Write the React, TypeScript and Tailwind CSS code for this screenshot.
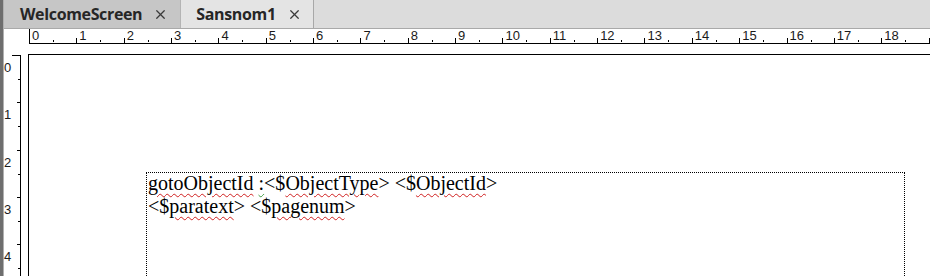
import { X } from "lucide-react";

const hUnits = Array.from({ length: 19 }, (_, i) => i);
const vUnits = Array.from({ length: 5 }, (_, i) => i);

function Tab({ title, active }: { title: string; active?: boolean }) {
  return (
    <div
      className={
        active
          ? "flex items-center h-full pl-[16px] pr-[12px] gap-[11px] bg-[#c6c6c6] border-r border-[#b4b4b4]"
          : "flex items-center h-full pl-[15px] pr-[11px] gap-[11px] bg-[#e4e4e4] border-r border-[#a8a8a8]"
      }
    >
      <span className="text-[16px] font-bold text-[#262626] leading-none tracking-[-0.35px]">{title}</span>
      <X size={15} strokeWidth={2} className="text-[#3a3a3a]" />
    </div>
  );
}

export default function App() {
  return (
    <div
      className="w-[930px] h-[276px] overflow-hidden flex bg-white"
      style={{ fontFamily: '"Open Sans", "Liberation Sans", sans-serif' }}
    >
      {/* window edge */}
      <div className="w-[3px] h-full bg-[#6e6e6e] shrink-0" />
      <div className="w-[1px] h-full bg-[#b0b0b0] shrink-0" />

      <div className="flex-1 flex flex-col min-w-0">
        {/* tab bar */}
        <div className="h-[29px] shrink-0 flex bg-[#dcdcdc] border-b border-[#a9a9a9]">
          <Tab title="WelcomeScreen" active />
          <Tab title="Sansnom1" />
        </div>

        {/* horizontal ruler */}
        <div className="h-[25px] shrink-0 flex pl-[25px]" style={{ fontFamily: '"Liberation Sans", Arial, sans-serif' }}>
          <div className="flex h-[15px] border-b border-black border-l">
            {hUnits.map((n) => (
              <div key={n} className="relative w-[47.35px] shrink-0 h-full">
                {n > 0 && <div className="absolute left-[-1px] bottom-0 w-[1px] h-[5px] bg-black" />}
                <span className="absolute left-[2px] top-[0px] text-[13px] leading-[14px] text-[#1a1a1a]">{n}</span>
                <div className="absolute left-[23px] bottom-[1px] w-[1px] h-[2px] bg-black" />
              </div>
            ))}
            <div className="relative w-[20px] shrink-0 h-full">
              <div className="absolute left-[-1px] bottom-0 w-[1px] h-[5px] bg-black" />
            </div>
          </div>
        </div>

        <div className="flex-1 flex min-h-0">
          {/* vertical ruler */}
          <div className="w-[17px] shrink-0 pt-[1px]" style={{ fontFamily: '"Liberation Sans", Arial, sans-serif' }}>
            <div className="flex flex-col border-t border-r border-black ml-[8px] w-[9px] h-full">
              {vUnits.map((n) => (
                <div key={n} className="relative h-[47.35px] shrink-0">
                  {n > 0 && <div className="absolute right-0 top-[-1px] w-[3px] h-[1px] bg-black" />}
                  <span className="absolute left-[-8px] top-[5px] text-[13px] leading-[14px] text-[#1a1a1a]">{n}</span>
                  <div className="absolute right-0 top-[23px] w-[2px] h-[1px] bg-black" />
                </div>
              ))}
            </div>
          </div>

          {/* page */}
          <div className="flex-1 ml-[7px] border-t border-l border-black min-w-0 pt-[117px] pl-[117px]">
            <div className="border-t border-l border-r border-dotted border-black w-[759px] h-[120px]">
              <div
                className="text-[20px] leading-[23px] text-black pl-[1px] -mt-[1px]"
                style={{ fontFamily: '"Liberation Serif", "Times New Roman", serif' }}
              >
                <p>
                  <span className="underline decoration-wavy decoration-[#d02020] decoration-1 underline-offset-[3px]">gotoObjectId</span>{" "}
                  <span className="underline decoration-wavy decoration-[#3a9a3a] decoration-1 underline-offset-[3px]">:</span>
                  &lt;$<span className="underline decoration-wavy decoration-[#d02020] decoration-1 underline-offset-[3px]">ObjectType</span>&gt;{" "}
                  &lt;$<span className="underline decoration-wavy decoration-[#d02020] decoration-1 underline-offset-[3px]">ObjectId</span>&gt;
                </p>
                <p>
                  &lt;$<span className="underline decoration-wavy decoration-[#d02020] decoration-1 underline-offset-[3px]">paratext</span>&gt;{" "}
                  &lt;$<span className="underline decoration-wavy decoration-[#d02020] decoration-1 underline-offset-[3px]">pagenum</span>&gt;
                </p>
              </div>
            </div>
          </div>
        </div>
      </div>
    </div>
  );
}
